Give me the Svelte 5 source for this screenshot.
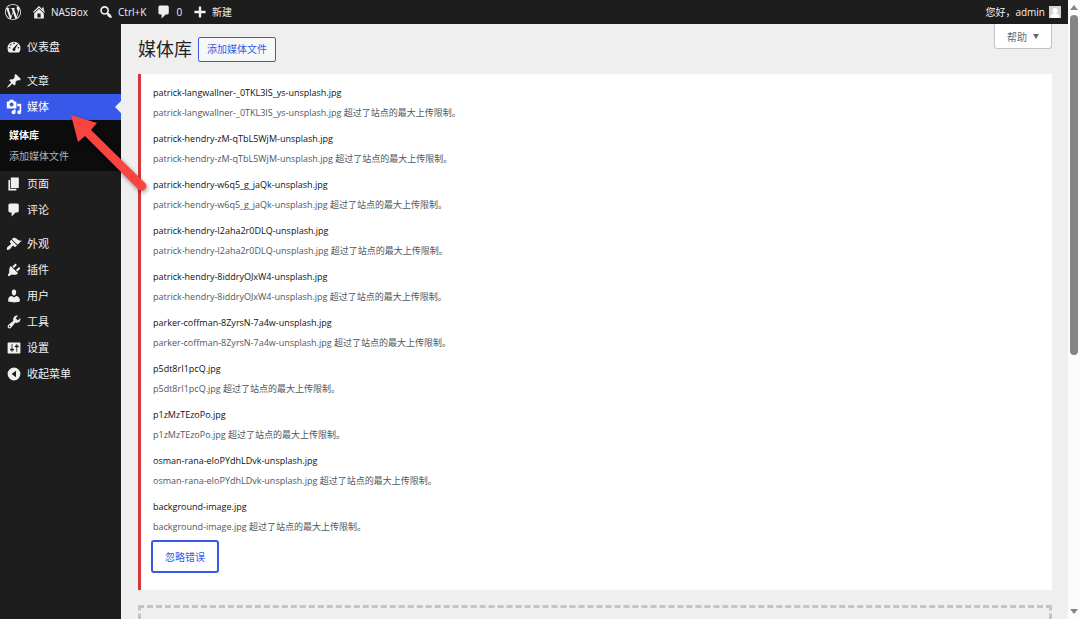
<script>
  let abierto = $state(false);
  let visible = $state(true);

  const iconos = {
    wordpress: "M21.469 6.825c.84 1.537 1.318 3.3 1.318 5.175 0 3.979-2.156 7.456-5.363 9.325l3.295-9.527c.615-1.54.82-2.771.82-3.864 0-.405-.026-.78-.07-1.11m-7.981.105c.647-.03 1.232-.105 1.232-.105.582-.075.514-.93-.067-.899 0 0-1.755.135-2.88.135-1.064 0-2.85-.15-2.85-.15-.585-.03-.661.855-.075.885 0 0 .54.061 1.125.09l1.68 4.605-2.37 7.08L5.354 6.9c.649-.03 1.234-.1 1.234-.1.585-.075.516-.93-.065-.896 0 0-1.746.138-2.874.138-.2 0-.438-.008-.69-.015C4.911 3.15 8.235 1.215 12 1.215c2.809 0 5.365 1.072 7.286 2.833-.046-.003-.091-.009-.141-.009-1.06 0-1.812.923-1.812 1.914 0 .89.513 1.643 1.06 2.531.411.72.89 1.643.89 2.977 0 .915-.354 1.994-.821 3.479l-1.075 3.585-3.9-11.61.001.014zM12 22.784c-1.059 0-2.081-.153-3.048-.437l3.237-9.406 3.315 9.087c.024.053.05.101.078.149-1.12.393-2.325.609-3.582.609M1.211 12c0-1.564.336-3.05.935-4.39L7.29 21.709C3.694 19.96 1.212 16.271 1.211 12M12 0C5.385 0 0 5.385 0 12s5.385 12 12 12 12-5.385 12-12S18.615 0 12 0",
    home: "M16 8.5l1.53 1.53-1.06 1.06L10 4.6l-6.47 6.49-1.06-1.06L10 2.5l4 4v-2h2v4zm-6-2.46l6 5.99V18H4v-5.97zM12 17v-5H8v5h4z",
    search: "M12.14 4.18c1.87 1.87 2.11 4.75.72 6.89.12.1.22.21.36.31.2.16.47.36.81.59.34.24.56.39.66.47.42.31.73.57.94.78.32.32.6.65.84 1 .25.35.44.69.59 1.04.14.35.21.68.18 1-.02.32-.14.59-.36.81s-.49.34-.81.36c-.31.02-.65-.04-.99-.19-.35-.14-.7-.34-1.04-.59-.35-.24-.68-.52-1-.84-.21-.21-.47-.52-.77-.93-.1-.13-.25-.35-.47-.66-.22-.32-.4-.57-.56-.78-.16-.2-.29-.35-.44-.5-2.07 1.09-4.69.76-6.44-.98-2.14-2.15-2.14-5.64 0-7.78 2.15-2.15 5.63-2.15 7.78 0zm-1.41 6.36c1.36-1.37 1.36-3.58 0-4.95-1.37-1.37-3.59-1.37-4.95 0-1.37 1.37-1.37 3.58 0 4.95 1.36 1.37 3.58 1.37 4.95 0z",
    plus: "M17 8.5v3h-5.500v5.500h-3v-5.500H3v-3h5.500V3h3v5.500z",
    dashboard: "M3.760 17h12.480c1.120-1.570 1.790-3.490 1.790-5.570a8.030 8.030 0 0 0-16.060 0c0 2.080.670 4 1.790 5.570zM10 4.500a1 1 0 1 1 0 2 1 1 0 0 1 0-2zM6 6.200a1 1 0 1 1 0 2 1 1 0 0 1 0-2zM14.500 6l.5.500-3.400 5.700c.7 1.300-.2 2.800-1.600 2.800-1.600 0-2.500-1.900-1.400-3.100zM4.500 10a1 1 0 1 1 0 2 1 1 0 0 1 0-2zM15.500 10a1 1 0 1 1 0 2 1 1 0 0 1 0-2z",
    post: "M10.44 3.02l1.82-1.82 6.36 6.35-1.83 1.82c-1.05-.68-2.48-.57-3.41.36l-.75.75c-.92.93-1.04 2.35-.35 3.41l-1.83 1.82-2.41-2.41-2.8 2.79c-.42.42-3.38 2.71-3.8 2.29s1.86-3.39 2.28-3.81l2.79-2.79L4.1 9.36l1.83-1.82c1.05.69 2.48.57 3.4-.36l.75-.75c.93-.92 1.05-2.35.36-3.41z",
    media: "M13 11V4c0-.55-.45-1-1-1h-1.67L9 1H5L3.67 3H2c-.55 0-1 .45-1 1v7c0 .55.45 1 1 1h10c.55 0 1-.45 1-1zM7 4.5c1.38 0 2.5 1.12 2.5 2.5S8.38 9.5 7 9.5 4.5 8.38 4.5 7 5.62 4.5 7 4.5zM14 6h5v10.5c0 1.38-1.12 2.5-2.5 2.5S14 17.88 14 16.5s1.12-2.5 2.5-2.5c.17 0 .34.02.5.05V9h-3V6zm-4 8.05V13h2v3.5c0 1.38-1.12 2.5-2.5 2.5S7 17.88 7 16.5 8.12 14 9.5 14c.17 0 .34.02.5.05z",
    page: "M6 15V2h10v13H6zm-1 1h8v2H3V5h2v11z",
    comment: "M5 2h9c1.1 0 2 .9 2 2v7c0 1.1-.9 2-2 2h-2l-5 5v-5H5c-1.1 0-2-.9-2-2V4c0-1.1.9-2 2-2z",
    appearance: "M14.48 11.06L7.41 3.99l1.5-1.5c.5-.56 2.3-.47 3.51.32 1.21.8 1.43 1.28 2.91 2.1 1.18.64 2.45 1.26 4.45.85zm-.71.71L6.7 4.7 4.93 6.47c-.39.39-.39 1.02 0 1.41l1.06 1.06c.39.39.39 1.03 0 1.42-.6.6-1.43 1.11-2.21 1.69-.35.26-.7.53-1.01.84C1.43 14.23.4 16.08 1.4 17.07c.99 1 2.84-.03 4.18-1.36.31-.31.58-.66.85-1.02.57-.78 1.08-1.61 1.69-2.21.39-.39 1.02-.39 1.41 0l1.06 1.06c.39.39 1.02.39 1.41 0z",
    plugin: "M13.11 4.36L9.87 7.6 8 5.73l3.24-3.24c.35-.34 1.05-.2 1.56.32.52.51.66 1.21.31 1.55zm-8 1.77l.91-1.12 9.01 9.01-1.19.84c-.71.71-2.63 1.16-3.82 1.16H6.14L4.9 17.26c-.59.59-1.54.59-2.12 0-.59-.58-.59-1.53 0-2.12l1.24-1.24v-3.88c0-1.13.4-3.19 1.09-3.89zm7.26 3.97l3.24-3.24c.34-.35 1.04-.21 1.55.31.52.51.66 1.21.31 1.55l-3.24 3.25z",
    user: "M10 9.25c-2.27 0-2.73-3.44-2.73-3.44C7 4.02 7.82 2 9.97 2c2.16 0 2.98 2.02 2.71 3.81 0 0-.41 3.44-2.68 3.44zm0 2.57L12.72 10c2.39 0 4.52 2.33 4.52 4.53v2.49s-3.65 1.13-7.24 1.13c-3.65 0-7.24-1.13-7.24-1.13v-2.49c0-2.25 1.94-4.48 4.47-4.48z",
    tool: "M16.68 9.77c-1.34 1.34-3.3 1.67-4.95.99l-5.41 6.52c-.99.99-2.59.99-3.58 0s-.99-2.59 0-3.57l6.52-5.42c-.68-1.65-.35-3.61.99-4.95 1.28-1.28 3.12-1.62 4.72-1.06l-2.89 2.89 2.82 2.82 2.86-2.87c.53 1.58.18 3.39-1.08 4.65zM3.81 16.21c.4.39 1.04.39 1.43 0 .4-.4.4-1.04 0-1.43-.39-.4-1.03-.4-1.43 0-.39.39-.39 1.03 0 1.43z",
    settings: "M18 16V4c0-.55-.45-1-1-1H3c-.55 0-1 .45-1 1v12c0 .55.45 1 1 1h14c.55 0 1-.45 1-1zM8 11h1c.55 0 1 .45 1 1s-.45 1-1 1H8v1.5c0 .28-.22.5-.5.5s-.5-.22-.5-.5V13H6c-.55 0-1-.45-1-1s.45-1 1-1h1V5.5c0-.28.22-.5.5-.5s.5.22.5.5V11zm5-2h-1c-.55 0-1-.45-1-1s.45-1 1-1h1V5.5c0-.28.22-.5.5-.5s.5.22.5.5V7h1c.55 0 1 .45 1 1s-.45 1-1 1h-1v5.5c0 .28-.22.5-.5.5s-.5-.22-.5-.5V9z",
    collapse: "M10 2a8 8 0 1 1 0 16 8 8 0 0 1 0-16zM12.500 6v8L7 10z"
  };

  const grupos = [
    [{ texto: "仪表盘", icono: "dashboard" }],
    [
      { texto: "文章", icono: "post" },
      { texto: "媒体", icono: "media", activo: true, sub: ["媒体库", "添加媒体文件"] },
      { texto: "页面", icono: "page" },
      { texto: "评论", icono: "comment" }
    ],
    [
      { texto: "外观", icono: "appearance" },
      { texto: "插件", icono: "plugin" },
      { texto: "用户", icono: "user" },
      { texto: "工具", icono: "tool" },
      { texto: "设置", icono: "settings" }
    ]
  ];

  const archivos = [
    "patrick-langwallner-_0TKL3IS_ys-unsplash.jpg",
    "patrick-hendry-zM-qTbL5WjM-unsplash.jpg",
    "patrick-hendry-w6q5_g_jaQk-unsplash.jpg",
    "patrick-hendry-I2aha2r0DLQ-unsplash.jpg",
    "patrick-hendry-8iddryOJxW4-unsplash.jpg",
    "parker-coffman-8ZyrsN-7a4w-unsplash.jpg",
    "p5dt8rI1pcQ.jpg",
    "p1zMzTEzoPo.jpg",
    "osman-rana-eIoPYdhLDvk-unsplash.jpg",
    "background-image.jpg"
  ];
</script>

{#snippet icono(nombre, caja = 20)}
  <svg class="icon" viewBox="0 0 {caja} {caja}" aria-hidden="true">
    <path fill-rule="evenodd" d={iconos[nombre]} />
  </svg>
{/snippet}

<div class="screen">
  <div class="admin">
    <header class="topbar">
      <a class="logo" href="#about" aria-label="WordPress">{@render icono("wordpress", 24)}</a>
      <a href="#site">{@render icono("home")}NASBox</a>
      <button>{@render icono("search")}Ctrl+K</button>
      <a href="#comments">{@render icono("comment")}0</a>
      <a href="#new">{@render icono("plus")}新建</a>
      <a class="account" href="#profile">
        您好，admin
        <svg class="avatar" viewBox="0 0 12 12" aria-hidden="true">
          <rect width="12" height="12" fill="#d4d4d4" />
          <circle cx="6" cy="4.500" r="2.500" fill="#fff" />
          <path d="M1.500 12c0-3 2-5 4.500-5s4.500 2 4.500 5z" fill="#fff" />
        </svg>
      </a>
    </header>

    <div class="body">
      <nav class="sidebar">
        {#each grupos as grupo}
          <ul class="group">
            {#each grupo as item}
              <li>
                <a class="item" class:active={item.activo} href="#menu">{@render icono(item.icono)}{item.texto}</a>
                {#if item.sub}
                  <ul class="submenu">
                    {#each item.sub as sub, i}
                      <li><a class:current={i === 0} href="#media">{sub}</a></li>
                    {/each}
                  </ul>
                {/if}
              </li>
            {/each}
            {#if grupo === grupos[2]}
              <li><button class="item">{@render icono("collapse")}收起菜单</button></li>
            {/if}
          </ul>
        {/each}
      </nav>

      <main class="content">
        <div class="heading">
          <h1>媒体库</h1>
          <a class="btn" href="#upload">添加媒体文件</a>
          <button class="help" aria-expanded={abierto} onclick={() => (abierto = !abierto)}>帮助 <span class="caret"></span></button>
        </div>

        {#if visible}
          <section class="notice">
            <div class="errors">
              {#each archivos as archivo}
                <div class="error">
                  <strong>{archivo}</strong>
                  <p>{archivo} 超过了站点的最大上传限制。</p>
                </div>
              {/each}
            </div>
            <button class="dismiss" onclick={() => (visible = false)}>忽略错误</button>
          </section>
        {/if}

        <div class="dropzone"></div>
      </main>
    </div>
  </div>

  <div class="scrollbar" aria-hidden="true">
    <span class="up"></span>
    <span class="thumb"></span>
    <span class="down"></span>
  </div>

  <svg class="arrow" viewBox="0 0 82 80" aria-hidden="true">
    <path d="M2 1L28 9 22 16 76 69Q79 72 76 75 73 78 69 75L16 22 9 28z" fill="#fb4340" />
  </svg>
</div>

<style>
  :global(body) { margin:0; background:#f0f0f1; }
  .screen { position:relative; display:flex; height:100vh; overflow:hidden; font-family:"Open Sans", "Noto Sans CJK SC", sans-serif; font-size:11px; color:#50575e; }
  .admin { flex:1; min-width:0; display:flex; flex-direction:column; }
  a { color:inherit; text-decoration:none; }
  button { font:inherit; color:inherit; border:0; background:none; padding:0; cursor:pointer; }
  ul { list-style:none; margin:0; padding:0; }
  .icon { width:16px; height:16px; flex:none; fill:currentColor; }

  .topbar { flex:none; display:flex; align-items:center; gap:10px; height:24px; padding:0 7px 0 5px; background:#1d1d1d; color:#f0f0f1; font-size:10px; line-height:12px; }
  .topbar a, .topbar button { display:flex; align-items:center; gap:4px; white-space:nowrap; }
  .topbar .account { margin-left:auto; }
  .avatar { width:12px; height:12px; }

  .body { flex:1; min-height:0; display:flex; }
  .sidebar { flex:none; width:121px; box-sizing:border-box; padding-top:10px; background:#1d1d1d; color:#f0f0f1; }
  .group { margin-bottom:8px; }
  .item { position:relative; display:flex; align-items:center; gap:5px; width:100%; height:26px; padding:0 6px; box-sizing:border-box; line-height:14px; }
  .item.active { background:#3858e9; color:#fff; }
  .item.active::after { content:""; position:absolute; right:0; top:7px; border:6px solid transparent; border-left-width:0; border-right-color:#f0f0f1; }
  .submenu { padding:5px 9px 4px; background:#0c0c0c; color:#b4b4b4; font-size:10px; line-height:21px; }
  .submenu a { display:block; }
  .submenu .current { color:#fff; font-weight:700; }

  .content { flex:1; min-width:0; display:flex; flex-direction:column; padding:0 16px 0 17px; background:#efefef; overflow:hidden; }
  .heading { flex:none; display:flex; align-items:center; gap:6px; height:50px; }
  h1 { margin:0; font-size:18px; font-weight:400; line-height:24px; color:#1d2327; }
  .btn { padding:0 8px; border:1px solid #3858e9; border-radius:2px; background:#f6f7f7; color:#3858e9; font-size:10px; line-height:23px; }
  .help { align-self:flex-start; display:flex; align-items:center; gap:6px; height:25px; margin-left:auto; padding:0 12px; border:1px solid #c3c4c7; border-top:0; border-radius:0 0 3px 3px; background:#fff; color:#646970; font-size:10px; }
  .caret { border:3px solid transparent; border-top:5px solid #646970; border-bottom:0; }

  .notice { flex:none; padding:9px 12px 17px 10px; border-left:3px solid #d63638; background:#fff; font-size:9px; }
  .errors { display:flex; flex-direction:column; gap:6px; padding-left:2px; }
  .error { line-height:20px; }
  .error strong { display:block; font-weight:500; color:#101010; }
  .error p { margin:0; }
  .dismiss { display:block; height:33px; margin-top:3px; padding:0 12px; border:2px solid #3858e9; border-radius:3px; color:#3858e9; font-size:10px; background:#fff; }
  .dropzone { flex:1; margin-top:15px; border:3px dashed #c3c4c7; border-bottom:0; }

  .scrollbar { flex:none; width:12px; display:flex; flex-direction:column; align-items:center; background:#fcfcfc; }
  .up { margin:5px 0; border:4px solid transparent; border-top:0; border-bottom:5px solid #858585; }
  .thumb { width:8px; height:340px; border-radius:4px; background:#858585; }
  .down { margin:auto 0 5px; border:4px solid transparent; border-bottom:0; border-top:5px solid #858585; }

  .arrow { position:absolute; left:69px; top:114px; width:82px; height:80px; filter:drop-shadow(1px 2px 2px rgba(0,0,0,.4)); pointer-events:none; }
</style>
